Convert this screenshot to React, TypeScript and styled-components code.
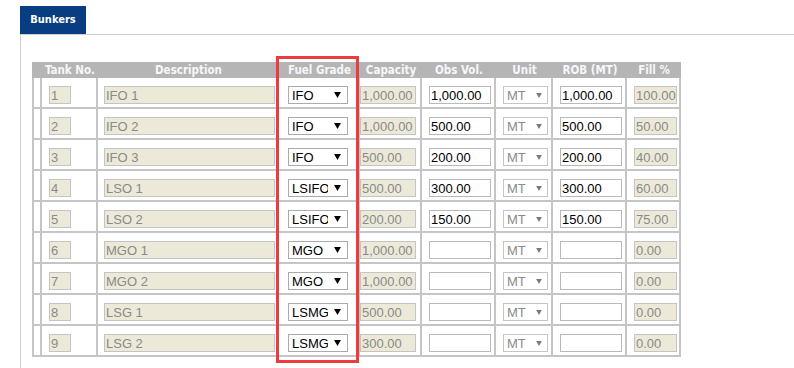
import styled, { createGlobalStyle } from 'styled-components';

const GlobalStyle = createGlobalStyle`
  body {
    margin: 0;
    background: #fff;
    font-family: "Liberation Sans", Arial, sans-serif;
  }
`;

const Page = styled.div`
  position: relative;
  height: 368px;
  box-sizing: border-box;
  padding: 6px 0 0 20px;
  overflow: hidden;
`;

const TabBar = styled.div`
  display: flex;
`;

const Tab = styled.div`
  font: bold 11px "DejaVu Sans Condensed", "DejaVu Sans", Tahoma, sans-serif;
  width: 66px;
  height: 28px;
  line-height: 28px;
  text-align: center;
  background: #083d82;
  color: #fff;
`;

const Panel = styled.div`
  border-top: 1px solid #cfcfcf;
  border-left: 1px solid #cfcfcf;
  padding: 27px 0 0 11px;
  height: 400px;
`;

const Table = styled.table`
  border-collapse: separate;
  border-spacing: 0;
  table-layout: fixed;
  width: 649px;
`;

const Col = styled.col<{ $w: number }>`
  width: ${p => p.$w}px;
`;

const Th = styled.th`
  font: bold 11.5px "DejaVu Sans Condensed", "DejaVu Sans", Tahoma, sans-serif;
  height: 16px;
  padding: 0;
  line-height: 16px;
  background: #b5b5b5;
  color: #f6f7fa;
  text-align: center;
  white-space: nowrap;
`;

const Td = styled.td<{ $pad?: number }>`
  box-sizing: border-box;
  padding: 8px 0 3px ${p => p.$pad ?? 7}px;
  vertical-align: top;
  border-right: 2px solid #c5c5c5;
  border-bottom: 2px solid #c5c5c5;
  overflow: hidden;

  &:first-child {
    padding: 0;
    border-left: 2px solid #c5c5c5;
  }
`;

const Field = styled.input<{ $w: number; $ro?: boolean }>`
  font: 13px "Liberation Sans", Arial, sans-serif;
  display: block;
  box-sizing: border-box;
  width: ${p => p.$w}px;
  height: 18px;
  margin: 0;
  padding: 0 0 0 1px;
  border: 1px solid ${p => (p.$ro ? '#c4c4c4' : '#b9b9b9')};
  border-radius: 0;
  background: ${p => (p.$ro ? '#ece9d8' : '#fff')};
  color: ${p => (p.$ro ? '#8a8a8a' : '#000')};
  outline: none;
`;

const Select = styled.div<{ $w: number; $muted?: boolean }>`
  font: 13px "Liberation Sans", Arial, sans-serif;
  display: flex;
  align-items: center;
  box-sizing: border-box;
  width: ${p => p.$w}px;
  height: 18px;
  border: 1px solid ${p => (p.$muted ? '#c4c4c4' : '#ababab')};
  background: #fff;
  color: ${p => (p.$muted ? '#8a8a8a' : '#000')};
  overflow: hidden;
`;

const SelectText = styled.span`
  flex: 1;
  min-width: 0;
  padding-left: 3px;
  white-space: nowrap;
  overflow: hidden;
`;

const Arrow = styled.span<{ $w: number }>`
  display: flex;
  justify-content: center;
  flex: 0 0 ${p => p.$w}px;
  background: #fff;
`;

const Highlight = styled.div`
  position: absolute;
  left: 276px;
  top: 56px;
  width: 83px;
  height: 307px;
  box-sizing: border-box;
  border: 3px solid #ee3b40;
  pointer-events: none;
`;

type Tank = {
  no: number;
  desc: string;
  grade: string;
  cap: string;
  obs: string;
  rob: string;
  fill: string;
};

const tanks: Tank[] = [
  { no: 1, desc: 'IFO 1', grade: 'IFO', cap: '1,000.00', obs: '1,000.00', rob: '1,000.00', fill: '100.00' },
  { no: 2, desc: 'IFO 2', grade: 'IFO', cap: '1,000.00', obs: '500.00', rob: '500.00', fill: '50.00' },
  { no: 3, desc: 'IFO 3', grade: 'IFO', cap: '500.00', obs: '200.00', rob: '200.00', fill: '40.00' },
  { no: 4, desc: 'LSO 1', grade: 'LSIFO', cap: '500.00', obs: '300.00', rob: '300.00', fill: '60.00' },
  { no: 5, desc: 'LSO 2', grade: 'LSIFO', cap: '200.00', obs: '150.00', rob: '150.00', fill: '75.00' },
  { no: 6, desc: 'MGO 1', grade: 'MGO', cap: '1,000.00', obs: '', rob: '', fill: '0.00' },
  { no: 7, desc: 'MGO 2', grade: 'MGO', cap: '1,000.00', obs: '', rob: '', fill: '0.00' },
  { no: 8, desc: 'LSG 1', grade: 'LSMG', cap: '500.00', obs: '', rob: '', fill: '0.00' },
  { no: 9, desc: 'LSG 2', grade: 'LSMG', cap: '300.00', obs: '', rob: '', fill: '0.00' },
];

function Caret({ size, color }: { size: number; color: string }) {
  return (
    <svg width={size} height={size - 1} viewBox="0 0 8 7">
      <polygon points="0,0 8,0 4,7" fill={color} />
    </svg>
  );
}

export default function App() {
  return (
    <Page>
      <GlobalStyle />
      <TabBar>
        <Tab>Bunkers</Tab>
      </TabBar>
      <Panel>
        <Table>
          <colgroup>
            <Col $w={10} />
            <Col $w={56} />
            <Col $w={181} />
            <Col $w={81} />
            <Col $w={62} />
            <Col $w={74} />
            <Col $w={57} />
            <Col $w={74} />
            <Col $w={54} />
          </colgroup>
          <thead>
            <tr>
              <Th />
              <Th>Tank No.</Th>
              <Th>Description</Th>
              <Th>Fuel Grade</Th>
              <Th>Capacity</Th>
              <Th>Obs Vol.</Th>
              <Th>Unit</Th>
              <Th>ROB (MT)</Th>
              <Th>Fill %</Th>
            </tr>
          </thead>
          <tbody>
            {tanks.map(t => (
              <tr key={t.no}>
                <Td />
                <Td>
                  <Field $w={22} $ro readOnly value={String(t.no)} />
                </Td>
                <Td $pad={6}>
                  <Field $w={171} $ro readOnly value={t.desc} />
                </Td>
                <Td $pad={9}>
                  <Select $w={60}>
                    <SelectText>{t.grade}</SelectText>
                    <Arrow $w={19}>
                      <Caret size={7} color="#000" />
                    </Arrow>
                  </Select>
                </Td>
                <Td $pad={0}>
                  <Field $w={56} $ro readOnly value={t.cap} />
                </Td>
                <Td>
                  <Field $w={62} defaultValue={t.obs} />
                </Td>
                <Td>
                  <Select $w={45} $muted>
                    <SelectText>MT</SelectText>
                    <Arrow $w={17}>
                      <Caret size={6} color="#7a7a7a" />
                    </Arrow>
                  </Select>
                </Td>
                <Td>
                  <Field $w={62} defaultValue={t.rob} />
                </Td>
                <Td>
                  <Field $w={43} $ro readOnly value={t.fill} />
                </Td>
              </tr>
            ))}
          </tbody>
        </Table>
      </Panel>
      <Highlight />
    </Page>
  );
}
